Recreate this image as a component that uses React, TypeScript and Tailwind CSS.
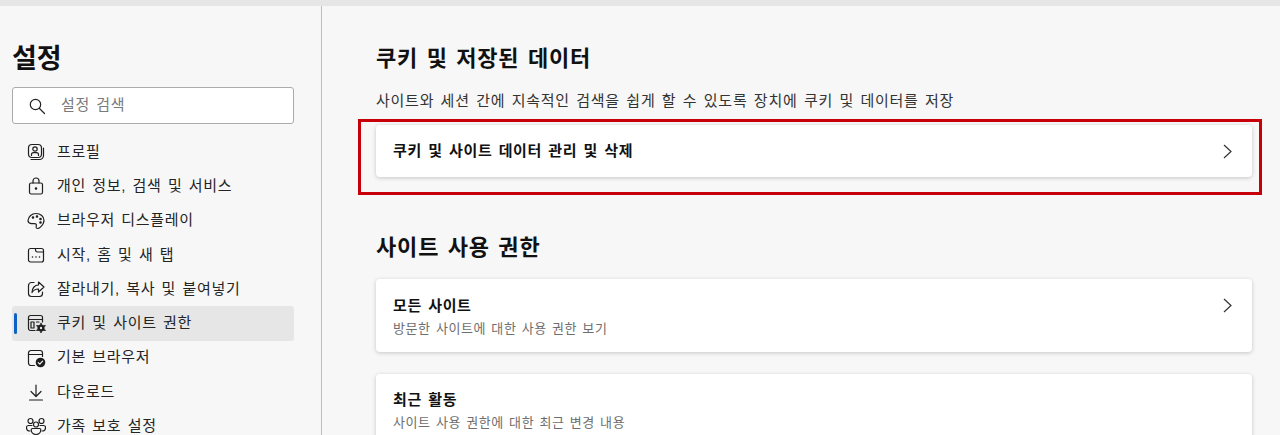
import type { ReactNode } from "react";

const FONT = "font-['Liberation_Sans','Noto_Sans_CJK_KR',sans-serif]";

function Svg({ children }: { children: ReactNode }) {
  return (
    <svg
      width="20"
      height="20"
      viewBox="0 0 20 20"
      fill="none"
      stroke="#1f1f1f"
      strokeWidth="1.2"
      strokeLinecap="round"
      strokeLinejoin="round"
    >
      {children}
    </svg>
  );
}

const NAV_ITEMS: { label: string; active?: boolean; icon: ReactNode }[] = [
  {
    label: "프로필",
    icon: (
      <Svg>
        <rect x="2.5" y="2.5" width="13" height="13" rx="3.5" />
        <circle cx="9" cy="7" r="2.2" />
        <path d="M5.5 13.5v-.8c0-1.2 1-2 2-2h3c1 0 2 .8 2 2v.8" />
        <path d="M5 17.5h8.5c2.2 0 4-1.8 4-4V6" />
      </Svg>
    ),
  },
  {
    label: "개인 정보, 검색 및 서비스",
    icon: (
      <Svg>
        <rect x="3.5" y="7" width="13" height="11" rx="1.8" />
        <path d="M7 7V5a3 3 0 0 1 6 0v2" />
        <circle cx="10" cy="12.5" r=".7" fill="#1f1f1f" />
      </Svg>
    ),
  },
  {
    label: "브라우저 디스플레이",
    icon: (
      <Svg>
        <path d="M10 2.5c4.6 0 8 3 8 7 0 2.8-1.8 5-3.6 6.6-1.5 1.3-3.2 1.9-4 .9-.9-1.2.6-2.6-.3-3.8-1-1.3-3-.3-4.8-.5C3 12.400 2 11 2 9.500c.4-4 3.800-7 8-7Z" />
        <circle cx="11" cy="5.500" r=".7" fill="#1f1f1f" />
        <circle cx="14.500" cy="8" r=".7" fill="#1f1f1f" />
        <circle cx="14.500" cy="11.500" r=".7" fill="#1f1f1f" />
        <circle cx="7" cy="6.500" r=".7" fill="#1f1f1f" />
      </Svg>
    ),
  },
  {
    label: "시작, 홈 및 새 탭",
    icon: (
      <Svg>
        <rect x="2.500" y="3.500" width="15" height="13.500" rx="2" />
        <path d="M9.500 3.500v1.500a2 2 0 0 0 2 2h6" />
        <path d="M6.500 12h.01M10 12h.01M13.500 12h.01" strokeWidth="1.600" />
      </Svg>
    ),
  },
  {
    label: "잘라내기, 복사 및 붙여넣기",
    icon: (
      <Svg>
        <path d="M8 3.500H5.500a3 3 0 0 0-3 3v8a3 3 0 0 0 3 3h8a3 3 0 0 0 3-3V13" />
        <path d="M12.500 3 18 8l-5.500 5v-3c-3 0-5 1-6.500 3.500 0-4 2.500-7.500 6.500-7.500Z" />
      </Svg>
    ),
  },
  {
    label: "쿠키 및 사이트 권한",
    active: true,
    icon: (
      <Svg>
        <path d="M9 17.500H4.500a2 2 0 0 1-2-2v-11a2 2 0 0 1 2-2h10a2 2 0 0 1 2 2V9" />
        <path d="M2.500 6.500h14" />
        <rect x="5" y="9" width="3" height="6" />
        <path d="M10.500 9H13" />
        <circle cx="15" cy="15" r="3.600" fill="#1f1f1f" stroke="none" />
        <path d="M15 10.500v9M11 12.700l8 4.600M11 17.300l8-4.600" strokeWidth="1.500" />
        <circle cx="15" cy="15" r="1.200" fill="#e6e6e6" stroke="none" />
      </Svg>
    ),
  },
  {
    label: "기본 브라우저",
    icon: (
      <Svg>
        <path d="M8.500 17.500H5a2.500 2.500 0 0 1-2.500-2.500V5A2.500 2.500 0 0 1 5 2.500h9A2.500 2.500 0 0 1 16.500 5v3.500" />
        <path d="M2.500 6.500h14" />
        <circle cx="14.500" cy="14.500" r="4.800" fill="#1f1f1f" stroke="none" />
        <path d="m12.200 14.600 1.600 1.500 2.800-3" stroke="#f7f7f7" />
      </Svg>
    ),
  },
  {
    label: "다운로드",
    icon: (
      <Svg>
        <path d="M10 3v11M5 9.500l5 5 5-5M3.500 18h13" />
      </Svg>
    ),
  },
  {
    label: "가족 보호 설정",
    icon: (
      <Svg>
        <circle cx="4.500" cy="5" r="2.500" />
        <circle cx="15.500" cy="5" r="2.500" />
        <circle cx="10" cy="8.500" r="2.500" />
        <path d="M6 9.500H2.500c-1.200 0-2 .8-2 2 0 2 1.500 3.500 3.500 3.500" />
        <path d="M14 9.500h3.500c1.200 0 2 .8 2 2 0 2-1.500 3.500-3.500 3.500" />
        <path d="M6.500 12.500h7c.8 0 1.300.5 1.300 1.300 0 2.700-2 4.700-4.800 4.700s-4.800-2-4.800-4.700c0-.8.500-1.300 1.300-1.300Z" />
      </Svg>
    ),
  },
];

function NavItem({ label, active, icon }: (typeof NAV_ITEMS)[number]) {
  return (
    <div
      className={`relative flex h-[34.25px] shrink-0 items-center rounded-[3px] pl-[14px] text-[15px] tracking-[0.7px] [word-spacing:1.5px] text-[#242424] ${
        active ? "bg-[#e6e6e6]" : ""
      }`}
    >
      {active && (
        <span className="absolute left-[2px] top-[7px] h-[21px] w-[3px] rounded-full bg-[#0f62c4]" />
      )}
      <span className="flex w-[31px] shrink-0 items-center">{icon}</span>
      <span>{label}</span>
    </div>
  );
}

function Chevron() {
  return (
    <svg width="9" height="15" viewBox="0 0 9 15" fill="none" stroke="#333" strokeWidth="1.2" className="mt-[3px] shrink-0">
      <path d="M1 1l7 6.500-7 6.500" />
    </svg>
  );
}

function Card({
  title,
  desc,
  chevron = true,
  className,
}: {
  title: string;
  desc?: string;
  chevron?: boolean;
  className: string;
}) {
  return (
    <div
      className={`flex justify-between rounded-[4px] bg-white pl-[17px] pr-[20px] shadow-[0_1px_4px_rgba(0,0,0,0.2)] ${className}`}
    >
      <div>
        <p className="text-[15px] font-bold leading-[22px] tracking-[0.65px] [word-spacing:1.5px] text-[#111]">
          {title}
        </p>
        {desc && (
          <p className="mt-[2px] text-[13px] leading-[20px] tracking-[0.6px] [word-spacing:1px] text-[#6e6e6e]">
            {desc}
          </p>
        )}
      </div>
      {chevron && <Chevron />}
    </div>
  );
}

export default function App() {
  return (
    <div className={`flex h-[435px] w-[1280px] flex-col overflow-hidden bg-[#f7f7f7] ${FONT}`}>
      <div className="h-[6px] shrink-0 bg-[#e6e6e6]" />
      <div className="flex min-h-0 flex-1">
        {/* 사이드바 */}
        <aside className="flex w-[322px] shrink-0 flex-col border-r border-[#bdbdbd] pl-[12px] pr-[27px]">
          <h1 className="mt-[35px] text-[27px] font-bold leading-[36px] text-[#111]">설정</h1>
          <div className="mt-[10px] flex h-[37px] shrink-0 items-center rounded-[3px] border border-[#ababab] bg-white pl-[15px]">
            <svg width="18" height="18" viewBox="0 0 18 18" fill="none" stroke="#222" strokeWidth="1.2" strokeLinecap="round">
              <circle cx="7.500" cy="7.500" r="5.200" />
              <path d="m11.500 11.500 5 5" />
            </svg>
            <span className="ml-[15px] text-[15px] tracking-[0.7px] [word-spacing:1.5px] text-[#7a7a7a]">설정 검색</span>
          </div>
          <nav className="mt-[11px] flex flex-col">
            {NAV_ITEMS.map((item) => (
              <NavItem key={item.label} {...item} />
            ))}
          </nav>
        </aside>

        {/* 본문 */}
        <main className="relative min-w-0 flex-1 pl-[54px] pr-[28px]">
          <h2 className="mt-[38px] text-[22px] font-bold leading-[30px] tracking-[0.85px] [word-spacing:1.5px] text-[#111]">
            쿠키 및 저장된 데이터
          </h2>
          <p className="mt-[16px] text-[15px] leading-[22px] tracking-[0.75px] [word-spacing:1.5px] text-[#333]">
            사이트와 세션 간에 지속적인 검색을 쉽게 할 수 있도록 장치에 쿠키 및 데이터를 저장
          </p>
          <Card title="쿠키 및 사이트 데이터 관리 및 삭제" className="mt-[13px] h-[52px] items-center [&>svg]:mt-0" />
          {/* 빨간 강조 표시 */}
          <div className="pointer-events-none absolute left-[36px] top-[113px] h-[76px] w-[904px] border-[3px] border-[#c8000a]" />
          <h2 className="mt-[55px] text-[22px] font-bold leading-[32px] tracking-[0.85px] [word-spacing:1.5px] text-[#111]">
            사이트 사용 권한
          </h2>
          <Card
            title="모든 사이트"
            desc="방문한 사이트에 대한 사용 권한 보기"
            className="mt-[15px] h-[73px] items-start pt-[16px]"
          />
          <Card
            title="최근 활동"
            desc="사이트 사용 권한에 대한 최근 변경 내용"
            chevron={false}
            className="mt-[22px] h-[73px] items-start pt-[15px]"
          />
        </main>
      </div>
    </div>
  );
}
